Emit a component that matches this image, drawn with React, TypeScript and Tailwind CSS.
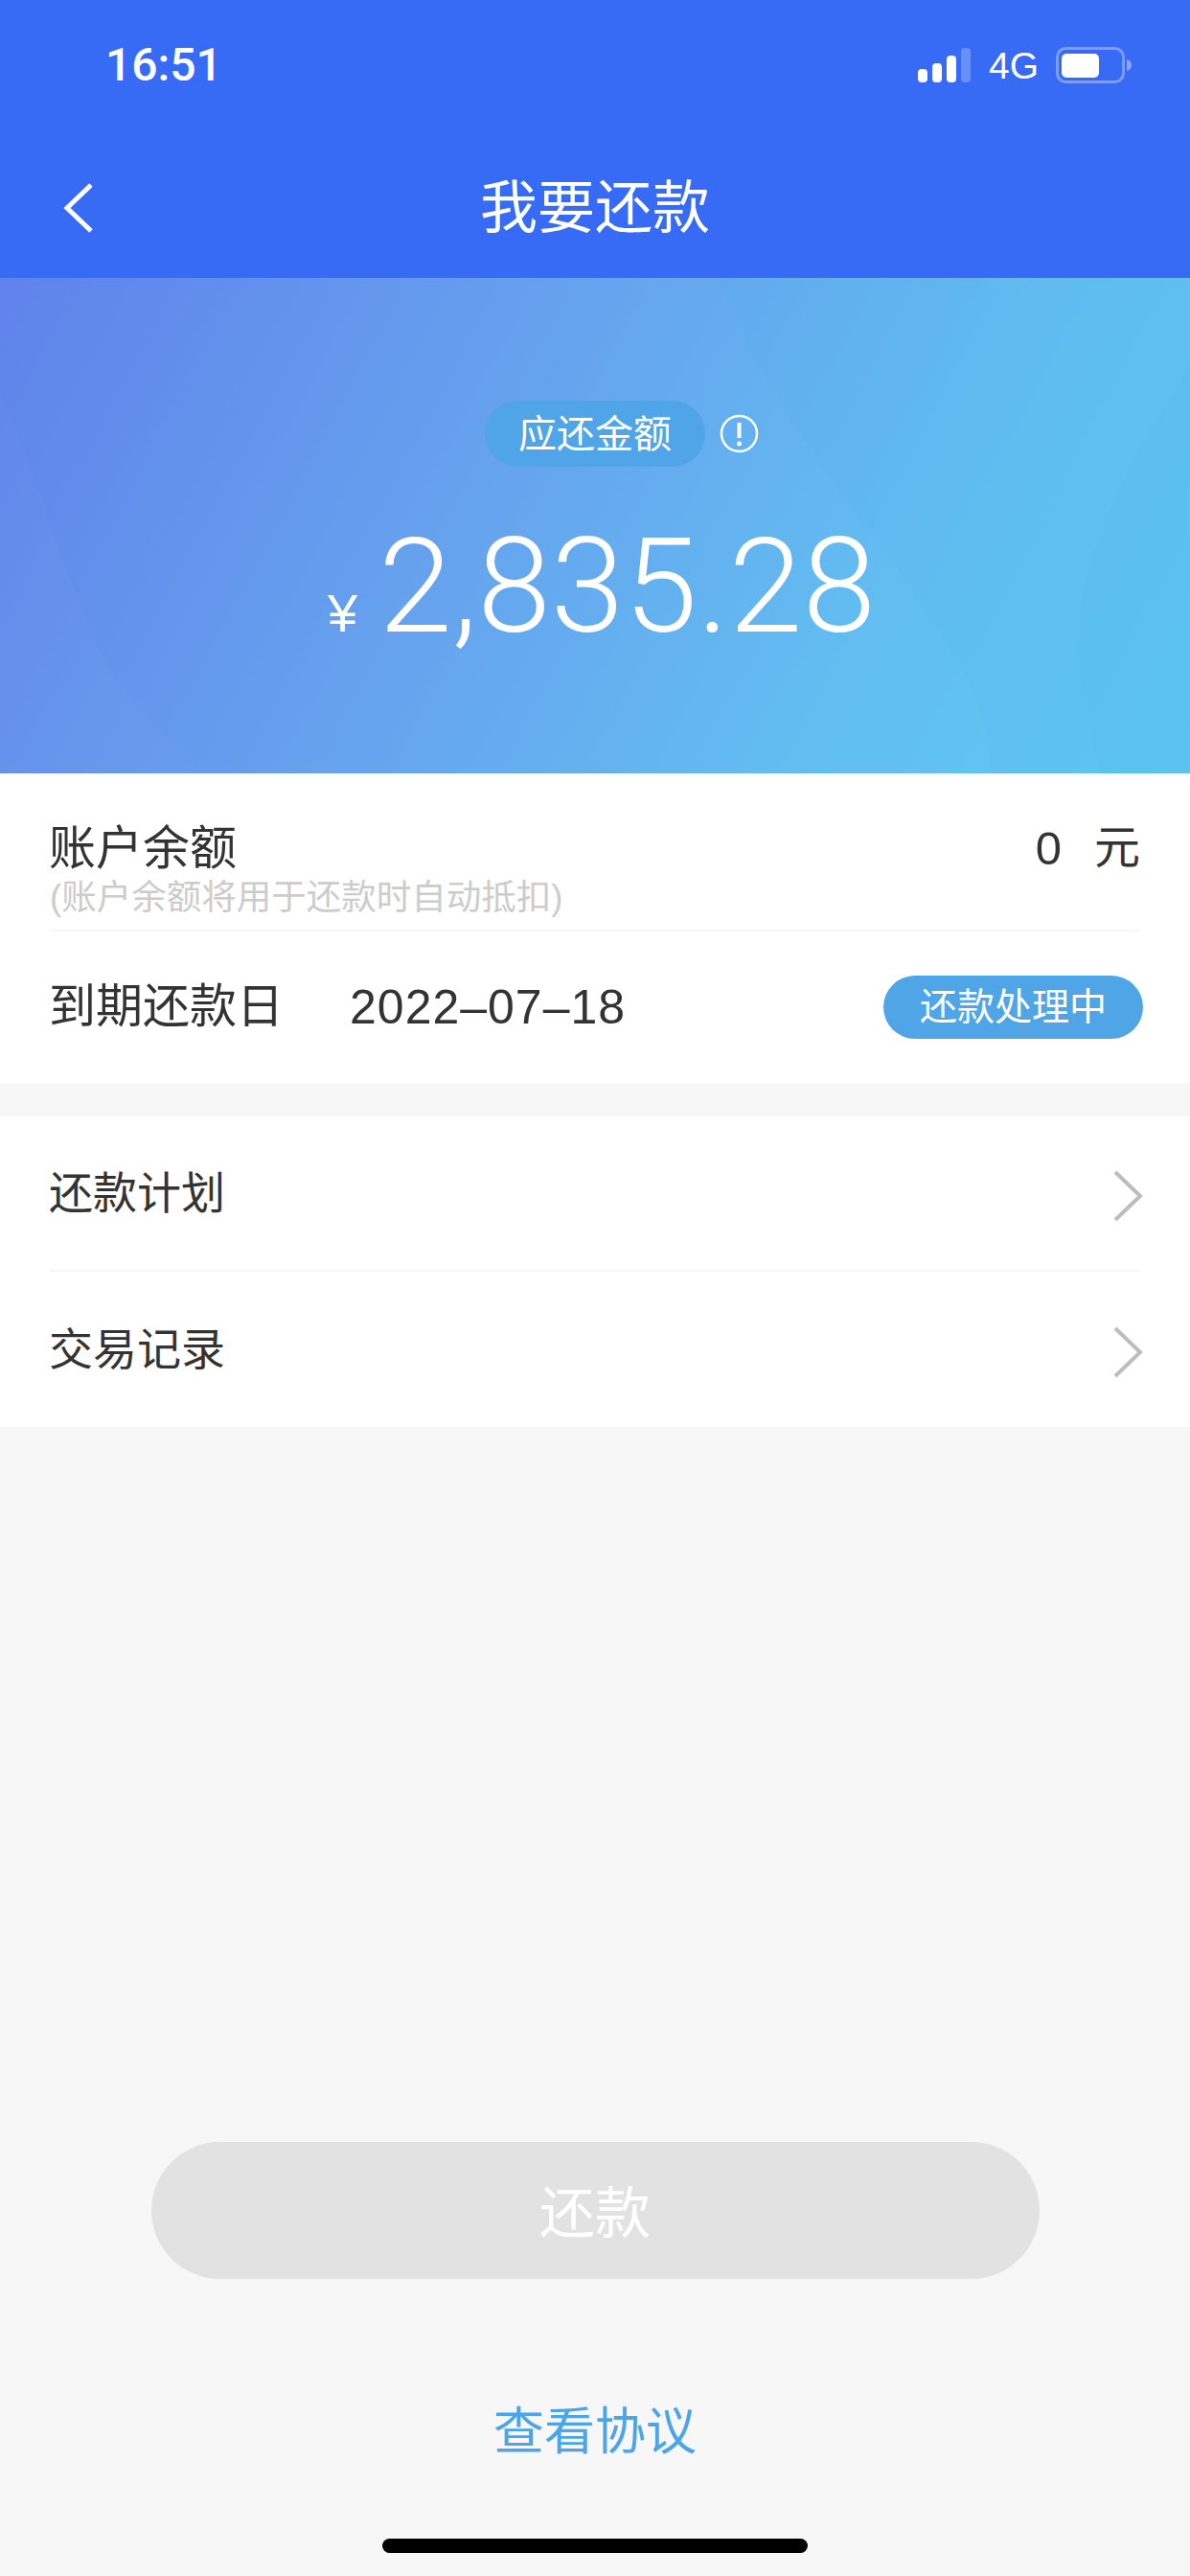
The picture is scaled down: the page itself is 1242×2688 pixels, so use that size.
const FONT = "font-['Liberation_Sans','Noto_Sans_CJK_SC',sans-serif]";

function Chevron() {
  return (
    <svg width="34" height="56" viewBox="0 0 34 56" fill="none" className="-mr-[4px] shrink-0 translate-y-[3px]">
      <path d="M4 3 L30 28 L4 53" stroke="#bdbdbd" strokeWidth="4" />
    </svg>
  );
}

function SignalIcon() {
  return (
    <svg width="56" height="36" viewBox="0 0 56 36">
      <rect x="0" y="22" width="10" height="14" rx="4" fill="#fff" />
      <rect x="15" y="16" width="10" height="20" rx="4" fill="#fff" />
      <rect x="30" y="8" width="10" height="28" rx="4" fill="#fff" />
      <rect x="45" y="0" width="10" height="36" rx="4" fill="#fff" fillOpacity="0.25" />
    </svg>
  );
}

function BatteryIcon() {
  return (
    <svg width="80" height="38" viewBox="0 0 80 38">
      <rect x="1.5" y="1.5" width="69" height="35" rx="9" fill="none" stroke="#fff" strokeOpacity="0.35" strokeWidth="3" />
      <rect x="6" y="7" width="39" height="25" rx="5" fill="#fff" />
      <path d="M74 13 C78 14 79 17 79 19 C79 21 78 24 74 25 Z" fill="#fff" fillOpacity="0.4" />
    </svg>
  );
}

function HeroWaves() {
  return (
    <svg className="absolute inset-0 h-full w-full" viewBox="0 0 1242 517" preserveAspectRatio="none">
      <path d="M0 120 C40 200 60 300 110 400 C150 460 190 490 212 517 L0 517 Z" fill="#ffffff" fillOpacity="0.02" />
      <path d="M750 0 C820 180 950 300 1010 420 C1030 460 1033 490 1035 517 L1242 517 L1242 0 Z" fill="#3f9fe8" fillOpacity="0.05" />
      <path d="M1242 90 C1190 180 1130 270 1125 370 C1122 430 1140 480 1150 517 L1242 517 Z" fill="#3f9fe8" fillOpacity="0.05" />
    </svg>
  );
}

function MenuRow({ label, divider }: { label: string; divider?: boolean }) {
  return (
    <div className={`flex h-[162px] items-center justify-between ${divider ? "border-b-2 border-[#f7f7f7]" : ""}`}>
      <span className="-ml-[1px] text-[46px] text-[#333]">{label}</span>
      <Chevron />
    </div>
  );
}

export default function App() {
  return (
    <div className={`flex h-[2688px] w-[1242px] flex-col overflow-hidden bg-[#f7f7f7] ${FONT}`}>
      <header className="h-[290px] bg-[#376bf5] text-white">
        <div className="flex h-[136px] items-center justify-between pr-[60px] pl-[110px]">
          <span className="font-['Roboto',sans-serif] text-[48px] leading-none font-medium">16:51</span>
          <div className="flex items-center gap-[18px]">
            <SignalIcon />
            <span className="text-[39px] leading-none">4G</span>
            <BatteryIcon />
          </div>
        </div>
        <div className="relative flex h-[154px] items-center justify-center">
          <svg width="40" height="56" viewBox="0 0 40 56" fill="none" className="absolute top-[53px] left-[62px]">
            <path d="M33 4 L8 28 L33 52" stroke="#fff" strokeWidth="5" />
          </svg>
          <h1 className="pt-[10px] text-[60px] font-normal">我要还款</h1>
        </div>
      </header>

      <section className="relative flex h-[517px] flex-col items-center bg-[linear-gradient(118deg,#5f82ea_0%,#66a2ee_40%,#62bdf1_72%,#5fc9f2_100%)] text-white">
        <HeroWaves />
        <div className="relative mt-[128px] flex items-center gap-[15px] pl-[56px]">
          <span className="flex h-[69px] w-[230px] items-center justify-center rounded-full bg-[#4fa5e8] text-[40px]">应还金额</span>
          <svg width="41" height="41" viewBox="0 0 41 41" fill="none">
            <circle cx="20.5" cy="20.5" r="18.5" stroke="#fff" strokeWidth="2.5" />
            <path d="M20.5 9 V25" stroke="#fff" strokeWidth="4" />
            <circle cx="20.5" cy="31" r="2.5" fill="#fff" />
          </svg>
        </div>
        <div className="relative mt-[50px] flex items-baseline gap-[22px] pl-[14px]">
          <span className="text-[56px] leading-none">¥</span>
          <span className="font-['Roboto','Liberation_Sans',sans-serif] text-[138px] leading-[150px] font-light">2,835.28</span>
        </div>
      </section>

      <section className="flex flex-col bg-white px-[52px]">
        <div className="h-[165px] border-b-2 border-[#f7f7f7] pt-[48px]">
          <div className="flex items-center justify-between text-[49px] leading-[60px] text-[#333]">
            <span className="-ml-[1px]">账户余额</span>
            <span className="flex gap-[34px]">
              <span>0</span>
              <span className="text-[48px]">元</span>
            </span>
          </div>
          <p className="text-[36.5px] leading-[44px] text-[#ccc]">(账户余额将用于还款时自动抵扣)</p>
        </div>
        <div className="flex h-[158px] items-center justify-between">
          <div className="-ml-[1px] flex items-center gap-[69px] text-[49px] text-[#333]">
            <span>到期还款日</span>
            <span className="text-[50px] tracking-[1px]">2022–07–18</span>
          </div>
          <span className="-mr-[3px] flex h-[66px] w-[271px] items-center justify-center rounded-full bg-[#4fa5e6] text-[39px] text-white">还款处理中</span>
        </div>
      </section>

      <section className="mt-[35px] flex flex-col bg-white px-[52px]">
        <MenuRow label="还款计划" divider />
        <MenuRow label="交易记录" />
      </section>

      <div className="mt-auto flex flex-col items-center">
        <button type="button" className="flex h-[143px] w-[927px] items-center justify-center rounded-full bg-[#e2e2e2] pt-[6px] text-[58px] text-white">
          还款
        </button>
        <a className="mt-[125px] text-[53px] leading-[70px] text-[#4ba5e8]">查看协议</a>
        <div className="mt-[76px] mb-[24px] h-[15px] w-[444px] rounded-full bg-black" />
      </div>
    </div>
  );
}
